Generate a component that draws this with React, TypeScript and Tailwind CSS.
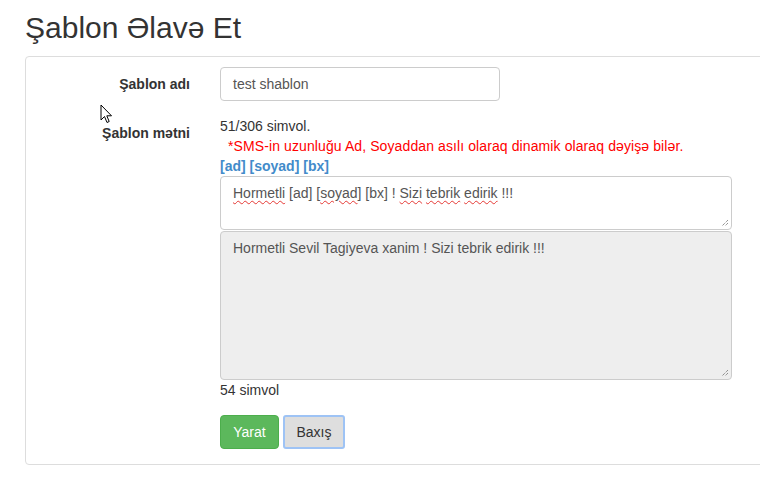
import React from "react";

const Wavy = ({ children }: { children: React.ReactNode }) => (
  <span className="underline decoration-wavy decoration-[#e53935] decoration-1 underline-offset-[2px]">{children}</span>
);

const Grip = () => (
  <svg className="absolute right-[2px] bottom-[2px]" width="9" height="9" viewBox="0 0 9 9">
    <path d="M8 2 L2 8 M8 5 L5 8" stroke="#666" strokeWidth="1" strokeDasharray="1 1" />
  </svg>
);

export default function App() {
  return (
    <div
      className="relative w-[760px] h-[500px] overflow-hidden bg-white text-[14px] text-[#333]"
      style={{ fontFamily: '"Liberation Sans", Arial, sans-serif' }}
    >
      <div className="pl-[25px]">
        <h1 className="mt-[11px] text-[30px] leading-[33px] font-normal text-[#333]">Şablon Əlavə Et</h1>
        <div className="mt-[12px] w-[800px] h-[409px] border border-[#ddd] rounded-[4px] pt-[10px]">
          <div className="flex">
            <div className="w-[164px] text-right font-bold leading-[20px] pt-[7px]">Şablon adı</div>
            <div className="ml-[30px]">
              <div className="w-[280px] h-[34px] border border-[#ccc] rounded-[4px] px-[12px] py-[6px] leading-[20px] text-[#555]">
                test shablon
              </div>
            </div>
          </div>
          <div className="flex mt-[15px]">
            <div className="w-[164px] text-right font-bold leading-[20px] pt-[7px]">Şablon mətni</div>
            <div className="ml-[30px] w-[512px]">
              <div className="leading-[20px]">51/306 simvol.</div>
              <div className="leading-[20px] text-[#ff0000] pl-[8px] tracking-[0.1px]">*SMS-in uzunluğu Ad, Soyaddan asılı olaraq dinamik olaraq dəyişə bilər.</div>
              <div className="leading-[20px] text-[#428bca] font-bold">[ad] [soyad] [bx]</div>
              <div className="relative h-[54px] border border-[#ccc] rounded-[4px] px-[12px] py-[6px] leading-[20px] text-[#555]">
                <Wavy>Hormetli</Wavy> [ad] [<Wavy>soyad</Wavy>] [bx] ! <Wavy>Sizi</Wavy> <Wavy>tebrik</Wavy> <Wavy>edirik</Wavy> !!!
                <Grip />
              </div>
              <div className="relative mt-[1px] h-[149px] border border-[#ccc] rounded-[4px] bg-[#eee] px-[12px] py-[6px] leading-[20px] text-[#555]">
                Hormetli Sevil Tagiyeva xanim ! Sizi tebrik edirik !!!
                <Grip />
              </div>
              <div className="leading-[20px]">54 simvol</div>
              <div className="flex gap-[4px] mt-[15px]">
                <button className="h-[34px] w-[59px] rounded-[4px] border border-[#4cae4c] bg-[#5cb85c] text-white leading-[20px]">
                  Yarat
                </button>
                <button className="h-[34px] w-[62px] rounded-[3px] border-2 border-[#9ec3f5] bg-[#dedede] text-[#333] leading-[20px]">
                  Baxış
                </button>
              </div>
            </div>
          </div>
        </div>
      </div>
      <svg className="absolute left-[100px] top-[104px]" width="14" height="21" viewBox="0 0 14 21">
        <path d="M1 1 L1 16 L4.5 12.5 L7 18.5 L9.2 17.5 L6.8 11.8 L11.5 11.8 Z" fill="white" stroke="black" strokeWidth="1" strokeLinejoin="miter" />
      </svg>
    </div>
  );
}
